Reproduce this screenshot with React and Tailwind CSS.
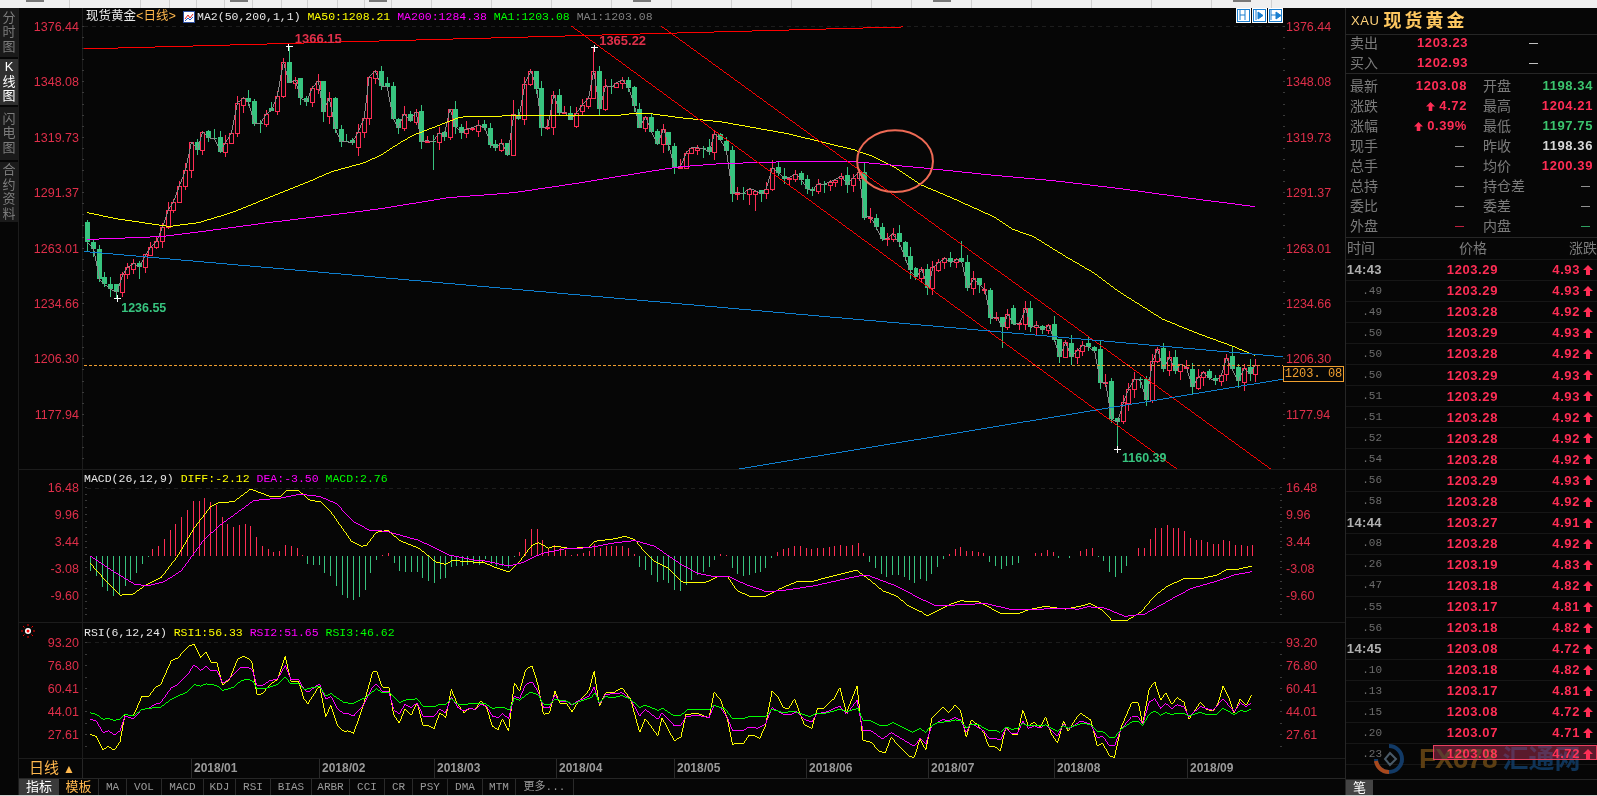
const RED = '#ff2d55';
const GREEN = '#37c47f';
const MONO = "font-['Liberation_Mono','Noto_Sans_CJK_SC',monospace]";

// [open, close] of each daily candle, in page pixels
const candles = [
  [222,243],[243,250],[250,280],[278,285],[285,290],[285,293],[293,275],[275,268],[270,264],[264,268],[268,255],[256,248],[248,242],[242,227],
  [227,210],[210,202],[202,186],[186,170],[170,142],[142,150],[150,132],[131,138],[138,139],[137,152],[152,143],[143,133],[133,103],[105,98],
  [98,102],[101,124],[123,124],[124,114],[108,111],[111,96],[96,62],[62,83],[83,80],[78,98],[98,102],[102,88],[89,81],[81,112],[116,98],[98,129],
  [129,142],[141,142],[140,143],[147,132],[132,118],[118,77],[78,71],[71,86],[83,87],[86,119],[119,128],[128,114],[114,121],[122,112],[111,142],
  [142,141],[141,142],[142,133],[132,137],[137,109],[109,127],[127,133],[133,129],[129,128],[131,125],[124,128],[128,145],[144,148],[150,143],
  [143,155],[155,114],[115,119],[119,84],[84,71],[71,89],[88,128],[128,127],[127,95],[95,113],[113,112],[113,120],[126,113],[111,105],[106,98],
  [98,71],[71,109],[109,86],[86,87],[87,83],[83,80],[80,88],[87,106],[109,128],[128,117],[117,132],[131,144],[144,129],[132,145],[146,168],[168,167],
  [168,153],[153,148],[150,148],[148,149],[147,152],[152,134],[134,140],[141,151],[150,194],[194,193],[193,194],[194,189],[194,191],[190,194],[193,189],
  [189,168],[167,173],[176,179],[179,178],[179,174],[173,180],[179,189],[189,191],[191,184],[184,185],[185,182],[182,180],[178,176],[175,185],[185,178],
  [178,172],[172,218],[218,217],[218,227],[227,240],[240,239],[240,234],[233,243],[243,258],[257,271],[269,278],[279,270],[270,289],[289,268],[271,263],
  [263,259],[259,263],[263,260],[259,263],[263,289],[289,279],[279,286],[291,290],[291,319],[319,318],[318,328],[328,315],[309,325],[325,324],[325,309],
  [309,328],[328,326],[327,331],[331,326],[325,341],[340,358],[358,343],[344,358],[358,351],[352,346],[344,348],[348,352],[350,384],[384,383],[382,420],
  [419,423],[422,403],[404,390],[390,380],[380,381],[380,401],[401,362],[362,350],[349,370],[371,358],[358,372],[372,365],[369,368],[370,388],[389,378],
  [378,373],[372,379],[379,382],[382,376],[375,359],[357,370],[368,382],[383,369],[368,375],[375,366],
];

// hand read wicks, everything else gets a small pseudo random one
const wicks = {
  5: [285,299], 35: [47,83], 60: [135,170], 88: [48,98], 147: [262,296], 152: [242,263], 159: [318,349],
  179: [419,450], 199: [347,370], 41: [81,122], 9: [262,280], 74: [100,155], 115: [189,205], 116: [191,211],
};

const candleX = (i) => Math.round(85 + i * 5.765);
const noise = (i, k) => Math.abs(Math.sin(i * 12.9898 + k * 78.233) * 43758.5453) % 1;

const macdBars = [
  -15,-20,-31,-35,-40,-38,-30,-24,-17,-8,-1,7,11,18,27,33,40,47,56,56,59,55,52,40,33,30,32,33,31,20,11,7,4,5,12,10,8,1,
  -8,-9,-9,-17,-20,-30,-39,-42,-44,-41,-34,-17,-4,1,3,-7,-15,-16,-16,-16,-22,-25,-27,-23,-22,-11,-10,-10,-9,-8,-9,
  -3,-8,-10,-10,-12,-1,4,18,28,28,17,8,12,8,6,1,2,3,5,13,8,10,10,11,11,8,2,-11,-14,-19,-26,-24,-27,-34,-35,-29,-24,-19,-16,-11,-4,2,1,
  -12,-18,-20,-19,-17,-16,-12,-2,4,7,8,10,11,8,7,8,8,9,10,12,11,12,14,3,-6,
  -12,-18,-21,-19,-19,-21,-24,-27,-23,-25,-18,-11,-3,2,7,9,5,5,4,3,-6,-10,-13,-10,-9,-7,0,0,3,3,6,4,-2,0,-2,0,5,7,8,-1,-5,-16,-21,-17,-10,0,
  8,8,18,29,29,32,29,29,26,19,17,17,15,13,13,17,16,12,12,11,12,
];

// lines read off 3x crops: [page x of crop, page y of crop, x scale, "zx,zy ..."]
const pts = (...parts) =>
  parts
    .map(([ox, oy, sx, s]) =>
      s.split(' ').map((p) => {
        const [x, y] = p.split(',').map(Number);
        return `${(ox + x / sx).toFixed(1)},${(oy + y / 3).toFixed(1)}`;
      }).join(' ')
    )
    .join(' ');

const ma50 = '85,213 113,219 167,227 197,223 230,213 267,198 307,182 330,172 363,163 380,155 400,142 413,135 457,118 463,117 513,116 567,116 613,116 630,114 650,114 680,118 720,122 787,134 820,142 853,150 873,157 893,167 920,185 953,199 993,217 1013,230 1033,237 1067,258 1093,273 1120,293 1163,320 1200,335 1233,347 1255,356';
const ma200 = '85,240 160,237 200,232 267,223 333,215 380,209 447,198 513,193 580,183 647,172 680,167 720,164 787,162 853,162 920,168 987,175 1053,181 1120,189 1200,200 1255,207';

const diff = pts(
  [0,460,3,'256,312 290,350 345,408 385,405 420,380 470,355 520,290 570,205 620,140 640,130 690,125 740,88 800,110 830,110 850,92 885,92 920,122 950,125 985,160 1045,245 1075,260 1090,258 1120,218 1155,212 1190,243 1250,267 1300,308 1330,315 1350,303 1440,310'],
  [480,480,3,'0,247 40,265 80,278 110,250 150,197 170,190 200,206 220,200 260,206 320,205 340,185 400,178 430,170 460,180 480,205 520,245 560,265 600,305 610,310 680,308 715,290 740,292 770,335 810,352 855,352 900,328 950,307 990,308 1070,287 1130,272'],
  [870,480,3,'0,302 40,335 80,350 120,383 160,402 175,410 250,373 275,365 330,368 395,403 450,403 480,392 530,382 590,390 650,378 665,373 700,392 730,423 775,425 820,398 860,350 900,320 950,298 1000,298 1050,287 1075,272 1110,270 1155,260']
);
const dea = pts(
  [0,460,3,'256,290 340,345 390,375 430,380 480,367 530,335 600,240 650,195 750,122 830,115 890,103 950,110 1000,132 1050,185 1100,212 1150,215 1250,243 1340,287 1420,303'],
  [480,480,3,'0,243 80,260 120,250 180,222 250,208 320,205 400,190 460,183 520,200 600,255 650,282 700,292 745,292 800,318 860,338 920,332 1000,320 1100,298 1150,287'],
  [870,480,3,'0,290 80,320 150,357 200,380 270,377 350,373 430,392 500,392 550,388 630,390 660,383 710,387 770,412 830,405 920,355 970,328 1050,305 1100,287 1155,277']
);

const rsi1 = pts(
  [0,600,2.613,'220,405 238,412 255,452 270,442 285,454 300,428 313,345 335,350 358,290 375,293 392,265 407,255 435,183 452,175 480,140 495,132 512,172 527,157 540,187 555,187 570,255 590,235 610,178 625,170 640,178 648,190 660,285 675,283 695,255 715,240 735,170 750,245 770,245 785,300 795,313 825,258 842,352 855,317 872,378 890,397 900,395 915,402 940,320 965,218 975,213 990,262 1008,265 1020,345 1035,372 1050,330 1067,347 1082,310 1098,380 1112,380 1127,388 1142,340 1157,355 1172,267 1190,315 1205,340 1220,327 1235,330 1250,305 1265,325 1280,380 1295,392 1307,358 1323,395 1338,250 1352,275 1368,210 1385,198 1400,255 1415,345 1430,342 1445,275 1458,312 1475,312 1490,337 1505,310 1535,272 1548,215 1562,320'],
  [580,630,3,'72,190 95,190 122,175 148,210 175,310 192,268 230,320 242,265 280,335 300,323 315,255 350,253 385,265 400,188 420,212 440,270 455,345 490,343 505,318 520,318 538,328 555,290 575,185 595,205 610,235 625,238 643,208 672,285 695,298 712,238 730,238 765,205 780,175 800,250 832,170 850,333 875,340 900,368 918,370 935,325 990,383 1005,385 1022,330 1040,363'],
  [930,630,3,'0,312 8,265 25,250 42,232 58,250 78,228 95,245 112,325 127,272 145,285 165,310 180,352 198,352 215,365 232,293 250,315 267,315 283,242 300,290 318,278 335,295 352,262 370,315 388,342 406,275 420,307 442,270 458,252 488,272 508,350 525,343 545,382 560,385 580,295 612,220 632,220 645,285 665,178 682,157 700,212 715,190 733,225 750,205 770,218 785,270 820,218 838,240 858,245 872,225 888,170 908,210 922,252 940,208 958,228 974,198']
);
const rsi2 = pts(
  [0,600,2.613,'220,360 238,365 255,400 270,395 285,407 300,395 313,350 335,358 358,330 375,328 392,315 407,310 435,265 452,255 480,222 495,195 512,213 527,200 540,213 555,213 570,250 590,235 615,205 635,202 648,210 660,257 675,258 695,243 715,238 735,197 750,240 770,240 785,270 795,278 825,253 842,300 855,290 872,328 890,343 900,342 915,350 940,318 965,262 975,253 990,275 1008,277 1020,330 1035,345 1050,315 1067,325 1082,310 1098,350 1112,350 1127,350 1142,330 1157,340 1172,293 1190,325 1205,335 1220,327 1235,330 1250,315 1265,320 1280,350 1295,355 1307,343 1323,358 1338,290 1352,297 1368,255 1385,247 1400,275 1415,325 1430,325 1445,287 1458,305 1475,305 1490,317 1505,305 1535,290 1548,262 1562,315'],
  [580,630,3,'72,195 122,190 148,210 175,260 192,240 230,270 243,250 280,290 300,287 315,262 350,258 385,265 400,228 420,235 440,265 455,303 490,303 505,293 530,297 555,285 575,235 610,256 630,256 650,247 672,270 695,278 712,252 735,250 780,230 800,255 832,213 850,305 875,305 910,330 935,310 1005,352 1022,328 1040,345'],
  [930,630,3,'0,312 8,290 42,270 58,275 78,265 95,272 112,310 127,282 165,305 180,328 198,328 215,333 232,297 250,313 267,313 283,275 300,297 318,290 335,297 352,285 388,322 406,283 420,300 458,275 488,285 508,325 525,322 545,350 560,350 580,300 612,262 632,262 645,285 665,218 682,208 700,238 715,222 733,238 750,226 770,233 785,262 820,232 858,243 888,208 922,248 940,220 958,232 974,220']
);
const rsi3 = pts(
  [0,600,2.613,'220,340 238,345 255,360 270,358 285,363 300,360 313,345 335,350 358,330 390,325 407,323 435,300 480,275 495,255 512,260 527,253 555,258 570,272 600,262 620,242 640,240 650,245 660,268 680,268 715,255 735,232 750,253 770,253 785,270 825,260 842,290 855,282 890,310 915,312 945,295 975,268 990,280 1010,280 1035,310 1050,302 1082,298 1098,320 1127,322 1142,315 1157,315 1172,297 1190,315 1260,312 1280,327 1310,323 1325,332 1338,297 1352,302 1380,278 1400,285 1415,315 1430,315 1445,300 1475,305 1490,315 1505,308 1540,295 1550,280 1562,310'],
  [580,630,3,'72,202 95,205 122,198 148,210 175,235 192,227 230,243 245,237 280,260 300,257 320,241 385,241 400,228 435,240 455,268 490,268 505,262 555,262 575,240 610,250 640,246 690,262 710,252 735,252 780,240 800,247 835,237 850,273 875,275 905,290 920,290 940,280 1000,310 1022,298 1040,310'],
  [930,630,3,'0,295 25,280 58,277 78,272 95,273 112,297 127,285 145,285 180,303 198,303 215,310 232,293 250,300 267,298 283,283 300,290 352,287 388,307 406,290 420,297 458,283 488,285 508,307 525,307 545,325 560,325 580,300 612,278 632,277 645,288 665,255 682,245 700,258 715,250 733,256 750,251 770,253 785,260 820,249 840,257 868,255 888,237 922,256 940,244 958,246 974,238']
);

const Line = ({ points, color, width = 1 }) => (
  <polyline points={points} fill="none" stroke={color} strokeWidth={width} shapeRendering="crispEdges" />
);

const UpArrow = ({ className }) => (
  <svg viewBox="0 0 10 10" className={className}>
    <polygon points="5,0 10,5 7,5 7,10 3,10 3,5 0,5" fill={RED} />
  </svg>
);

const Tick = ({ x, y }) => (
  <path d={`M${x - 3} ${y}H${x + 4}M${x} ${y - 3}V${y + 4}`} stroke="#fff" shapeRendering="crispEdges" />
);

const Candles = () => (
  <g shapeRendering="crispEdges">
    {candles.map(([o, c], i) => {
      const up = c < o;
      const top = Math.min(o, c);
      const bottom = Math.max(o, c);
      const [hi, lo] = wicks[i] || [top - Math.round(noise(i, 1) * 9), bottom + Math.round(noise(i, 2) * 9)];
      const x = candleX(i);
      const color = up ? RED : GREEN;
      return (
        <g key={i}>
          <path d={`M${x + 0.5} ${hi}V${lo}`} stroke={color} />
          {up ? (
            <rect x={x - 2 + 0.5} y={top + 0.5} width={4} height={Math.max(bottom - top, 1)} fill="#060606" stroke={color} />
          ) : (
            <rect x={x - 2} y={top} width={5} height={Math.max(bottom - top, 1)} fill={color} />
          )}
        </g>
      );
    })}
    <polyline points={candles.map(([, c], i) => `${candleX(i) + 0.5},${c}`).join(' ')} fill="none" stroke="#8a8a8a" />
  </g>
);

// faint scale marks beside the axis numbers
const ScaleTicks = ({ from, to, step, dash }) => (
  <g stroke="#3a3a3a" shapeRendering="crispEdges">
    {Array.from({ length: Math.floor((to - from) / step) + 1 }, (_, i) => from + i * step).map((y) => (
      <path key={y} d={`M80 ${Math.round(y)}H82M1283 ${Math.round(y)}H1285`} />
    ))}
    <path d={`M82 ${dash + 0.5}H1283`} stroke="#1d1d1d" strokeDasharray="4 4" />
  </g>
);

const PriceChart = () => (
  <svg viewBox="82 8 1201 462" className="block w-[1201px] h-full overflow-visible">
    <ScaleTicks from={27} to={465} step={11.08} dash={26} />
    <Candles />
    <Line points={ma50} color="#ffff00" />
    <Line points={ma200} color="#ff00ff" />
    <Line points="82,49 902,27" color="#ff0000" />
    <Line points="570,26 1177,470" color="#ff0000" />
    <Line points="660,26 1271,470" color="#ff0000" />
    <Line points="82,252 1283,357.5" color="#0f7fd0" />
    <Line points="738,470 1283,380" color="#0f7fd0" />
    <path d="M82 366.5H1283" stroke="#f0a030" strokeDasharray="3 2" shapeRendering="crispEdges" />
    <ellipse cx="894.5" cy="161.5" rx="38" ry="31" fill="none" stroke="#ee6a55" strokeWidth="2" />
    <Tick x={287} y={47} />
    <Tick x={593} y={48} />
    <Tick x={1117} y={450} />
    <Tick x={115} y={299} />
    <text x="293" y="43" fontSize="13" fill="#e0304a" fontWeight="700">1366.15</text>
    <text x="598" y="45" fontSize="13" fill="#e0304a" fontWeight="700">1365.22</text>
    <text x="119" y="313" fontSize="12.5" fill={GREEN} fontWeight="700">1236.55</text>
    <text x="1122" y="463" fontSize="12.5" fill={GREEN} fontWeight="700">1160.39</text>
  </svg>
);

const MacdChart = () => (
  <svg viewBox="82 470 1201 153" className="block w-[1201px] h-full overflow-visible">
    <ScaleTicks from={488} to={620} step={6.7} dash={488} />
    <g shapeRendering="crispEdges">
      {macdBars.map((v, i) => (
        <path
          key={i}
          d={`M${candleX(i) + 0.5} 557V${557 - v}`}
          stroke={v >= 0 ? RED : GREEN}
        />
      ))}
    </g>
    <Line points={diff} color="#ffff00" />
    <Line points={dea} color="#ff00ff" />
  </svg>
);

const RsiChart = () => (
  <svg viewBox="82 623 1201 136" className="block w-[1201px] h-full overflow-visible">
    <ScaleTicks from={643} to={755} step={11.5} dash={642} />
    <Line points={rsi1} color="#ffff00" />
    <Line points={rsi2} color="#ff00ff" />
    <Line points={rsi3} color="#00ff00" />
  </svg>
);

const Axis = ({ labels, className }) => (
  <div className={`flex flex-col text-[#df2f4a] text-[12.5px] leading-[14px] ${className}`}>
    {labels.map((l) => (
      <div key={l}>{l}</div>
    ))}
  </div>
);

const ChartIcon = () => (
  <svg viewBox="0 0 12 12" className="w-3 h-3 ml-[7px] mr-[2px] shrink-0">
    <rect x="0.5" y="0.5" width="11" height="11" fill="#fff" stroke="#2f4f9f" />
    <path d="M2 8L5 4L7 7L10 3" stroke="#e02020" fill="none" />
    <path d="M2 10L5 7L7 9L10 6" stroke="#2060d0" fill="none" />
  </svg>
);

const MiniButton = ({ children }) => (
  <div className="w-[15px] h-[15px] bg-white p-[1px]">
    <svg viewBox="0 0 13 13" className="block w-[13px] h-[13px] bg-white" stroke="#1a7fd0" fill="#1a7fd0">
      <rect x="0.5" y="0.5" width="12" height="12" fill="none" />
      {children}
    </svg>
  </div>
);

const Sidebar = () => {
  const groups = [
    { lines: ['分', '时', '图'], h: 'h-[49px]' },
    { lines: ['K', '线', '图'], h: 'h-[46px]', active: true },
    { lines: ['闪', '电', '图'], h: 'h-[53px]' },
    { lines: ['合', '约', '资', '料'], h: 'h-[60px]' },
  ];
  return (
    <aside className="w-[19px] shrink-0 border-r border-[#1c1c1c] flex flex-col gap-[2px]">
      {groups.map((g) => (
        <div
          key={g.lines[0]}
          className={`${g.h} flex flex-col items-center justify-center text-[13px] leading-[14.5px] ${g.active ? 'bg-[#303030] text-white' : 'bg-[#1a1a1a] text-[#7c7c7c]'}`}
        >
          {g.lines.map((c) => (
            <span key={c}>{c}</span>
          ))}
        </div>
      ))}
    </aside>
  );
};

const dateTicks = [
  ['2018/01', 128],
  ['2018/02', 115],
  ['2018/03', 122],
  ['2018/04', 118],
  ['2018/05', 132],
  ['2018/06', 122],
  ['2018/07', 126],
  ['2018/08', 133],
  ['2018/09', 90],
];

const tabs = [
  ['w-[28px]', 'MA'],
  ['w-[35px]', 'VOL'],
  ['w-[42px]', 'MACD'],
  ['w-[32px]', 'KDJ'],
  ['w-[35px]', 'RSI'],
  ['w-[41px]', 'BIAS'],
  ['w-[38px]', 'ARBR'],
  ['w-[35px]', 'CCI'],
  ['w-[28px]', 'CR'],
  ['w-[35px]', 'PSY'],
  ['w-[35px]', 'DMA'],
  ['w-[33px]', 'MTM'],
  ['w-[58px]', '更多...'],
];

const BottomRows = () => (
  <>
    <div className="h-5 flex border-b border-[#262626] shrink-0">
      <div className="w-[64px] border-r border-[#262626] flex items-center pl-[10px] text-[#ffb84d] text-[15px]">
        日线
        <span className="ml-[4px] text-[12px]">▲</span>
      </div>
      <div className="w-[108px] shrink-0" />
      {dateTicks.map(([d, w]) => (
        <div
          key={d}
          style={{ width: w }}
          className="shrink-0 border-l border-[#2a2a2a] pl-[2px] text-[12px] leading-[18px] font-bold text-[#9a9a9a]"
        >
          {d}
        </div>
      ))}
    </div>
    <div className="h-4 flex items-stretch text-[#9a9a9a] text-[12px] leading-4 shrink-0">
      <div className="w-[40px] bg-[#3a3a3a] text-white text-center text-[13px]">指标</div>
      <div className="w-[40px] border-r border-[#2a2a2a] text-[#ffb84d] text-center text-[13px]">模板</div>
      {tabs.map(([w, t]) => (
        <div key={t} className={`${w} border-r border-[#2a2a2a] text-center ${MONO} text-[11px]`}>
          {t}
        </div>
      ))}
    </div>
  </>
);

const Quote = ({ label, value, color = 'text-[#e8e8e8]', arrow }) => (
  <div className="flex items-center justify-between">
    <span className="text-[#7c7c7c] text-[14px]">{label}</span>
    <span className={`flex items-center font-bold text-[13px] tracking-[0.6px] ${color}`}>
      {arrow && <UpArrow className="w-[9px] h-[9px] mr-[4px]" />}
      {value}
    </span>
  </div>
);

const Dash = ({ color = 'bg-[#909090]' }) => <span className={`w-[9px] h-px ${color} mr-[3px] mt-[1px]`} />;

const DashRow = ({ label, color }) => (
  <div className="flex items-center justify-between">
    <span className="text-[#7c7c7c] text-[14px]">{label}</span>
    <Dash color={color} />
  </div>
);

const trades = [
  ['14:43','1203.29','4.93'],['.49','1203.29','4.93'],['.49','1203.28','4.92'],['.50','1203.29','4.93'],['.50','1203.28','4.92'],['.50','1203.29','4.93'],
  ['.51','1203.29','4.93'],['.51','1203.28','4.92'],['.52','1203.28','4.92'],['.54','1203.28','4.92'],['.56','1203.29','4.93'],['.58','1203.28','4.92'],
  ['14:44','1203.27','4.91'],['.08','1203.28','4.92'],['.26','1203.19','4.83'],['.47','1203.18','4.82'],['.55','1203.17','4.81'],['.56','1203.18','4.82'],
  ['14:45','1203.08','4.72'],['.10','1203.18','4.82'],['.13','1203.17','4.81'],['.15','1203.08','4.72'],['.20','1203.07','4.71'],['.23','1203.08','4.72'],
];

const TradeRow = ({ time, price, change, last }) => (
  <div className="relative h-[21.05px] flex items-center border-b border-[#161616]">
    {last && <div className="absolute left-[87px] right-0 top-[1px] h-[15px] bg-[#5a1a2c] border border-[#e8405f]" />}
    <div className={`relative w-[36px] text-right ${time.length > 3 ? 'font-bold text-[#b0b0b0] text-[13px] tracking-[0.4px]' : `${MONO} text-[#6c6c6c] text-[11px]`}`}>
      {time}
    </div>
    <div className="relative w-[116px] text-right font-bold text-[13px] tracking-[0.6px] text-[#ff2d55]">
      {price}
    </div>
    <div className="relative w-[82px] text-right font-bold text-[13px] tracking-[0.6px] text-[#ff2d55]">{change}</div>
    <UpArrow className="relative w-[10px] h-[10px] ml-[3px]" />
  </div>
);

const SidePanel = () => (
  <aside className="relative w-[252px] shrink-0 border-l border-[#262626] flex flex-col overflow-hidden">
    <div className="h-[27px] border-b border-[#262626] flex items-center pl-[5px] shrink-0">
      <span className="text-[#ffd27a] text-[13px] tracking-[0.6px]">XAU</span>
      <span className="ml-[4px] text-[#ffc860] text-[18px] font-bold tracking-[3px]">现货黄金</span>
    </div>
    <div className="h-[39px] border-b border-[#262626] flex flex-col justify-end pl-[4px] shrink-0">
      <div className="flex items-center h-[20px]">
        <span className="w-[67px] text-[#7c7c7c] text-[14px]">卖出</span>
        <span className="w-[50px] text-right font-bold text-[13px] tracking-[0.6px] text-[#ff2d55]">1203.23</span>
        <span className="ml-[62px] w-[9px] h-px bg-[#c0c0c0]" />
      </div>
      <div className="flex items-center h-[20px]">
        <span className="w-[67px] text-[#7c7c7c] text-[14px]">买入</span>
        <span className="w-[50px] text-right font-bold text-[13px] tracking-[0.6px] text-[#ff2d55]">1202.93</span>
        <span className="ml-[62px] w-[9px] h-px bg-[#c0c0c0]" />
      </div>
    </div>
    <div className="h-[164px] border-b border-[#262626] pl-[4px] pt-[2px] grid grid-cols-[117px_110px] gap-x-[16px] auto-rows-[20px] shrink-0">
      <Quote label="最新" value="1203.08" color="text-[#ff2d55]" />
      <Quote label="开盘" value="1198.34" color="text-[#3cc46e]" />
      <Quote label="涨跌" value="4.72" color="text-[#ff2d55]" arrow />
      <Quote label="最高" value="1204.21" color="text-[#ff2d55]" />
      <Quote label="涨幅" value="0.39%" color="text-[#ff2d55]" arrow />
      <Quote label="最低" value="1197.75" color="text-[#3cc46e]" />
      <DashRow label="现手" />
      <Quote label="昨收" value="1198.36" color="text-[#d8d8d8]" />
      <DashRow label="总手" />
      <Quote label="均价" value="1200.39" color="text-[#ff2d55]" />
      <DashRow label="总持" />
      <DashRow label="持仓差" />
      <DashRow label="委比" />
      <DashRow label="委差" />
      <DashRow label="外盘" color="bg-[#c02040]" />
      <DashRow label="内盘" color="bg-[#2f9f60]" />
    </div>
    <div className="h-[22px] flex items-center text-[#7c7c7c] text-[14px] border-b border-[#161616] shrink-0">
      <span className="pl-[1px] w-[113px]">时间</span>
      <span className="w-[110px]">价格</span>
      <span>涨跌</span>
    </div>
    <div className="flex-1">
      {trades.map(([t, p, c], i) => (
        <TradeRow key={i} time={t} price={p} change={c} last={i === trades.length - 1} />
      ))}
    </div>
    <div className="h-[16px] border-t border-[#262626] shrink-0 flex">
      <div className="w-[27px] bg-[#444] text-white text-[13px] leading-[15px] text-center">笔</div>
    </div>
    {/* watermark, blended so the quotes under it stay readable */}
    <div className="absolute left-[27px] top-[735px] flex items-center mix-blend-lighten pointer-events-none">
      <svg viewBox="0 0 32 32" className="w-8 h-8">
        <path d="M16 3a13 13 0 1 1-13 13" fill="none" stroke="#123a66" strokeWidth="4" />
        <path d="M3 18a13 13 0 0 0 13 11" fill="none" stroke="#a8481c" strokeWidth="4" />
        <path d="M17 10l6 6-6 6-5-6z" fill="none" stroke="#4a5a68" strokeWidth="2" />
      </svg>
      <span className="ml-[14px] font-bold text-[28px] tracking-[-1px] leading-8 text-[#5c3e12]">FX678</span>
      <span className="ml-[6px] font-bold text-[26px] leading-8 text-[#0f3458]">汇通网</span>
    </div>
  </aside>
);

const TopStrip = () => (
  <div className="h-2 bg-[#efefef] shrink-0 flex overflow-hidden">
    {[70, 71, 29, 27, 28, 28, 29, 26, 30, 27, 27, 40, 60, 60, 60, 60, 60, 60, 80, 40, 60, 60, 60, 60, 60, 60].map((w, i) => (
      <div key={i} style={{ width: w }} className="shrink-0 border-r border-[#d0d0d0] flex items-start justify-center pt-0">
        {i % 5 === 0 && <span className="w-[18px] h-[2px] bg-[#777]" />}
      </div>
    ))}
  </div>
);

function App() {
  return (
    <div className="w-[1597px] h-[796px] overflow-hidden bg-[#060606] flex flex-col font-['Liberation_Sans','Noto_Sans_CJK_SC',sans-serif]">
      <TopStrip />
      <div className="flex-1 flex min-h-0">
        <Sidebar />
        <main className="w-[1326px] shrink-0 flex flex-col">
          {/* price pane */}
          <section className="h-[462px] flex border-b border-[#1c1c1c] shrink-0">
            <Axis
              className="w-[63px] pr-[3px] text-right pt-[12px] gap-[41.4px]"
              labels={['1376.44','1348.08','1319.73','1291.37','1263.01','1234.66','1206.30','1177.94']}
            />
            <div className="relative w-[1201px] border-l border-[#1c1c1c]">
              <PriceChart />
              <div className={`absolute left-0 top-[1px] h-4 flex items-center text-[11.5px] whitespace-pre ${MONO}`}>
                <span className="text-[#e8e8e8] text-[12.5px] ml-[3px]">现货黄金</span>
                <span className="text-[#ffb84d] text-[12.5px]">&lt;日线&gt;</span>
                <ChartIcon />
                <span className="text-[#e8e8e8]">MA2(50,200,1,1) </span>
                <span className="text-[#ffff00]">MA50:1208.21 </span>
                <span className="text-[#ff00ff]">MA200:1284.38 </span>
                <span className="text-[#00ff00]">MA1:1203.08 </span>
                <span className="text-[#808080]">MA1:1203.08</span>
              </div>
              <div className="absolute right-0 top-0 flex gap-px">
                <MiniButton>
                  <path d="M3 1V11M8 1V11M3 6H8" fill="none" />
                </MiniButton>
                <MiniButton>
                  <path d="M3 1V11" fill="none" />
                  <polygon points="5,3 10,6.5 5,10" />
                </MiniButton>
                <MiniButton>
                  <path d="M2 1V11M2 6H8" fill="none" />
                  <polygon points="7,3 12,6.5 7,10" />
                </MiniButton>
              </div>
            </div>
            <div className="relative w-[62px]">
              <Axis
                className="pl-[3px] pt-[12px] gap-[41.4px]"
                labels={['1376.44','1348.08','1319.73','1291.37','1263.01','1234.66','1206.30','1177.94']}
              />
              <div className={`absolute left-0 top-[358px] w-[61px] h-4 border border-[#f0a030] text-[#f0a030] text-[12px] leading-[14px] text-center whitespace-pre ${MONO}`}>
                1203. 08
              </div>
            </div>
          </section>
          {/* macd pane */}
          <section className="h-[153px] flex border-b border-[#1c1c1c] shrink-0">
            <Axis
              className="w-[63px] pr-[3px] text-right pt-[11px] gap-[12.9px]"
              labels={['16.48','9.96','3.44','-3.08','-9.60']}
            />
            <div className="relative w-[1201px] border-l border-[#1c1c1c]">
              <MacdChart />
              <div className={`absolute left-[1px] top-[1px] h-4 flex items-center text-[11.5px] whitespace-pre ${MONO}`}>
                <span className="text-[#e8e8e8]">MACD(26,12,9) </span>
                <span className="text-[#ffff00]">DIFF:-2.12 </span>
                <span className="text-[#ff00ff]">DEA:-3.50 </span>
                <span className="text-[#00ff00]">MACD:2.76</span>
              </div>
            </div>
            <Axis
              className="w-[62px] pl-[3px] pt-[11px] gap-[12.9px]"
              labels={['16.48','9.96','3.44','-3.08','-9.60']}
            />
          </section>
          {/* rsi pane */}
          <section className="h-[136px] flex border-b border-[#1c1c1c] shrink-0">
            <div className="relative w-[63px]">
              <Axis
                className="pr-[3px] text-right pt-[13px] gap-[9px]"
                labels={['93.20','76.80','60.41','44.01','27.61']}
              />
              <svg viewBox="0 0 14 14" className="absolute left-[2px] top-[1px] w-[14px] h-[14px]">
                <circle cx="7" cy="7" r="3" fill="#fff" />
                <circle cx="7" cy="7" r="1.5" fill="#f00000" />
                <path d="M7 0V2M7 12V14M0 7H2M12 7H14M2 2L3.5 3.5M12 2L10.5 3.5M2 12L3.5 10.5M12 12L10.5 10.5" stroke="#f00000" />
              </svg>
            </div>
            <div className="relative w-[1201px] border-l border-[#1c1c1c]">
              <RsiChart />
              <div className={`absolute left-[1px] top-[2px] h-4 flex items-center text-[11.5px] whitespace-pre ${MONO}`}>
                <span className="text-[#e8e8e8]">RSI(6,12,24) </span>
                <span className="text-[#ffff00]">RSI1:56.33 </span>
                <span className="text-[#ff00ff]">RSI2:51.65 </span>
                <span className="text-[#00ff00]">RSI3:46.62</span>
              </div>
            </div>
            <Axis
              className="w-[62px] pl-[3px] pt-[13px] gap-[9px]"
              labels={['93.20','76.80','60.41','44.01','27.61']}
            />
          </section>
          <BottomRows />
        </main>
        <SidePanel />
      </div>
      <div className="h-px bg-[#cfcfcf] shrink-0" />
    </div>
  );
}

export default App;
